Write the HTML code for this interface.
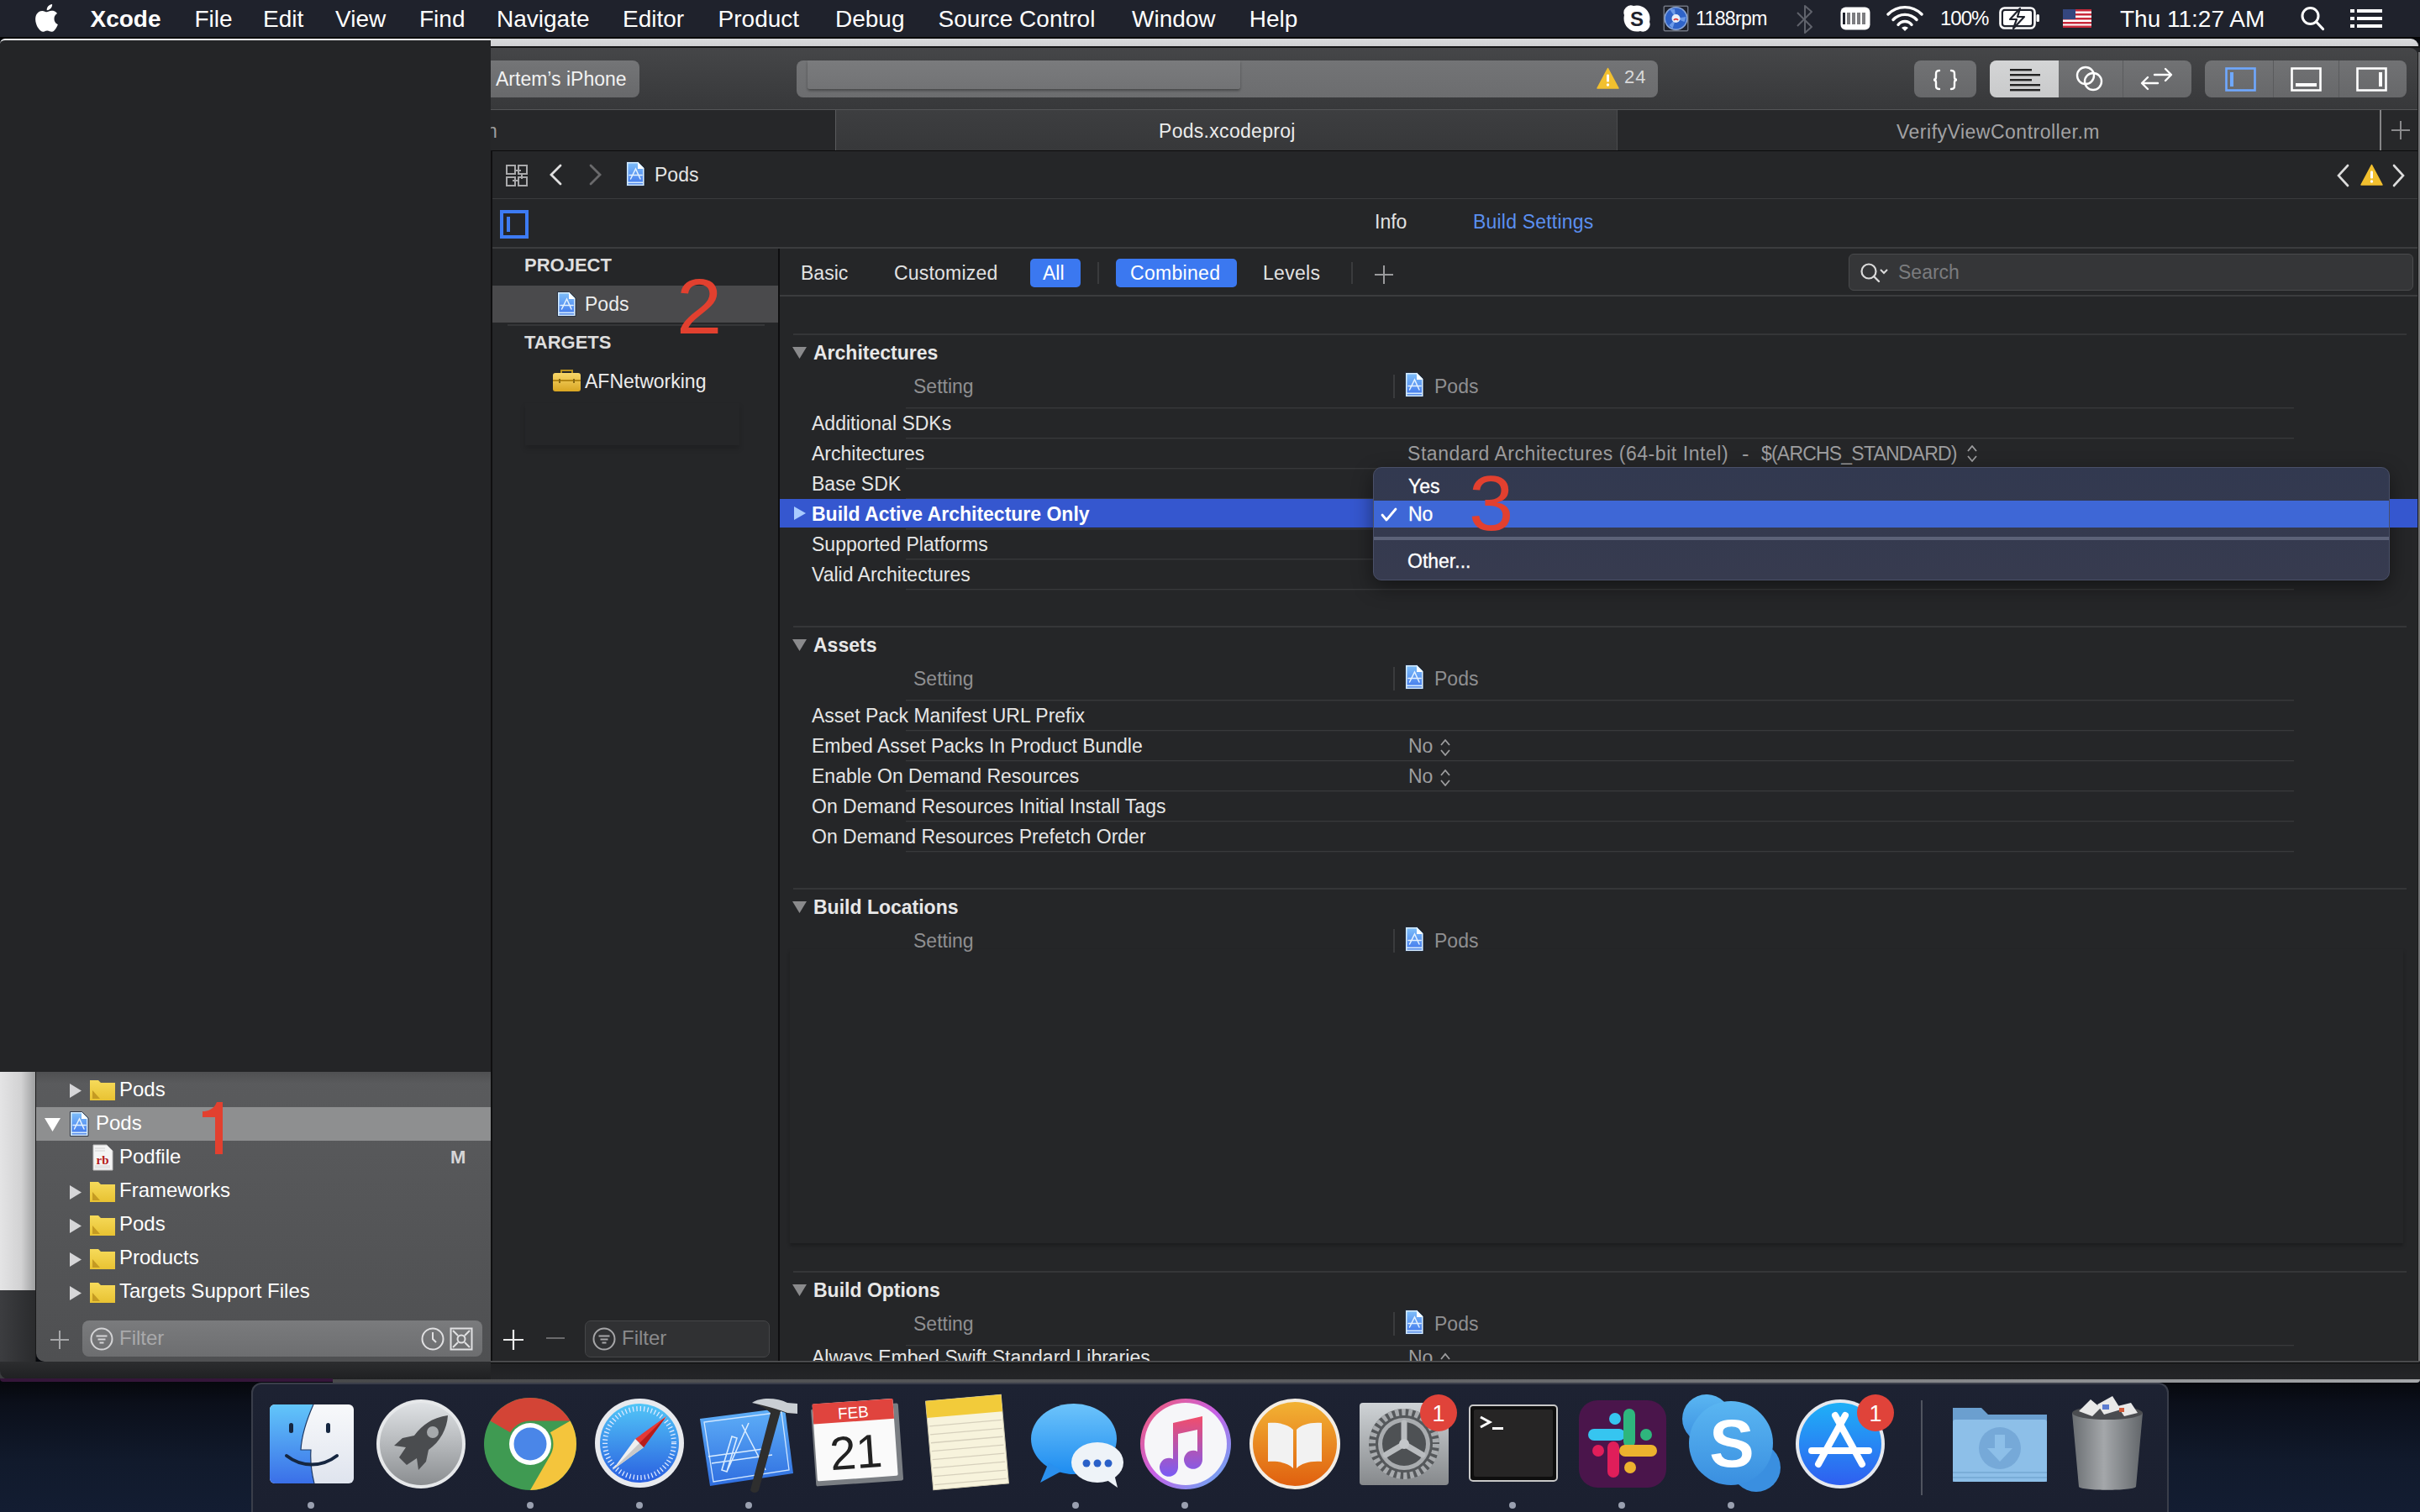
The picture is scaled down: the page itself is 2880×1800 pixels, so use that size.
<!DOCTYPE html><html><head><meta charset="utf-8"><style>
html,body{margin:0;padding:0;}
body{width:2880px;height:1800px;position:relative;overflow:hidden;background:#161b2b;font-family:"Liberation Sans",sans-serif;}
.r{position:absolute;}
.t{position:absolute;line-height:1;white-space:nowrap;}
</style></head><body>
<div class="r" style="left:0px;top:0px;width:2880px;height:1800px;background:linear-gradient(#06080d 0px,#06080d 1646px,#0b0f1a 1670px,#111a2c 1740px,#131d32 1800px);"></div>
<div class="r" style="left:0px;top:0px;width:2880px;height:44px;background:#1f222c;"></div>
<div class="r" style="left:0px;top:44px;width:2880px;height:2px;background:#050506;"></div>
<svg class="r" style="left:40px;top:4px;" width="30" height="34" viewBox="0 0 30 34"><path fill="#fff" d="M24.5 18.2c0-4.1 3.4-6.1 3.5-6.2-1.9-2.8-4.9-3.2-6-3.2-2.5-.3-5 1.5-6.3 1.5-1.3 0-3.3-1.5-5.4-1.4-2.8 0-5.400 1.6-6.800 4.1-2.9 5-.7 12.500 2.1 16.600 1.4 2 3 4.200 5.200 4.200 2.100-.1 2.900-1.400 5.400-1.400 2.500 0 3.200 1.400 5.400 1.300 2.200 0 3.600-2 5-4 1.600-2.300 2.200-4.500 2.300-4.600-.1 0-4.400-1.700-4.400-6.600zM20.400 6.100c1.100-1.400 1.900-3.300 1.700-5.200-1.600.1-3.600 1.100-4.700 2.400-1 1.200-1.900 3.100-1.700 5 1.800.1 3.600-.9 4.700-2.200z"/></svg>
<div class="t " style="left:107.5px;top:8.5px;font-size:28px;color:#ffffff;font-weight:700;">Xcode</div>
<div class="t " style="left:231.5px;top:8.5px;font-size:28px;color:#ffffff;font-weight:400;">File</div>
<div class="t " style="left:313.0px;top:8.5px;font-size:28px;color:#ffffff;font-weight:400;">Edit</div>
<div class="t " style="left:399.0px;top:8.5px;font-size:28px;color:#ffffff;font-weight:400;">View</div>
<div class="t " style="left:499.0px;top:8.5px;font-size:28px;color:#ffffff;font-weight:400;">Find</div>
<div class="t " style="left:591.0px;top:8.5px;font-size:28px;color:#ffffff;font-weight:400;">Navigate</div>
<div class="t " style="left:741.0px;top:8.5px;font-size:28px;color:#ffffff;font-weight:400;">Editor</div>
<div class="t " style="left:854.6px;top:8.5px;font-size:28px;color:#ffffff;font-weight:400;">Product</div>
<div class="t " style="left:994.0px;top:8.5px;font-size:28px;color:#ffffff;font-weight:400;">Debug</div>
<div class="t " style="left:1116.6px;top:8.5px;font-size:28px;color:#ffffff;font-weight:400;">Source Control</div>
<div class="t " style="left:1347.0px;top:8.5px;font-size:28px;color:#ffffff;font-weight:400;">Window</div>
<div class="t " style="left:1486.8px;top:8.5px;font-size:28px;color:#ffffff;font-weight:400;">Help</div>
<svg class="r" style="left:1931px;top:5px;" width="34" height="34" viewBox="0 0 34 34"><path fill="#fff" d="M17 1.5a15.5 15.5 0 0 1 15.5 15.5c0 1.4-.2 2.700-.5 4a8.500 8.500 0 0 1-11 11 15.500 15.500 0 0 1-4 .5A15.500 15.500 0 0 1 1.500 17c0-1.400.2-2.700.5-4A8.500 8.500 0 0 1 13 2c1.300-.3 2.600-.5 4-.5z"/><text x="17" y="26" text-anchor="middle" font-family="Liberation Sans" font-weight="700" font-size="24" fill="#1f222c">S</text></svg>
<svg class="r" style="left:1979px;top:6px;" width="31" height="32" viewBox="0 0 31 32"><rect x="0.500" y="0.500" width="30" height="31" rx="2" fill="#6f7480"/><rect x="2" y="2" width="27" height="28" rx="1" fill="#1f222c"/><circle cx="15.500" cy="16" r="14" fill="#8aa6d8"/><circle cx="15.500" cy="16" r="12.500" fill="#2f63c8"/><g fill="#6c9ae8"><path d="M15.500 16L8 5h6zM15.500 16l12-2-2 6zM15.500 16l-4 12-4-4z"/></g><circle cx="15.500" cy="16" r="5" fill="#e8eef8"/><path d="M13 18a3 3 0 0 1 5 0" fill="none" stroke="#d33" stroke-width="1.800"/></svg>
<div class="t " style="left:2018.0px;top:10.5px;font-size:23px;color:#ffffff;font-weight:400;letter-spacing:-0.6px;">1188rpm</div>
<svg class="r" style="left:2136px;top:6px;" width="24" height="34" viewBox="0 0 24 34"><path d="M3 9l17 17-8 7V1l8 7L3 25" fill="none" stroke="#5f626b" stroke-width="2" stroke-linejoin="round"/></svg>
<svg class="r" style="left:2189px;top:7px;" width="38" height="30" viewBox="0 0 38 30"><rect x="1.500" y="1.500" width="35" height="27" rx="6" fill="#fff"/><g fill="#7d7d80"><rect x="9" y="8" width="4" height="14"/><rect x="15" y="8" width="4" height="14"/><rect x="21" y="8" width="4" height="14"/><rect x="27" y="8" width="4" height="14"/></g><rect x="4" y="8" width="3" height="14" fill="#1f222c"/></svg>
<svg class="r" style="left:2244px;top:6px;" width="46" height="32" viewBox="0 0 46 32"><g fill="none" stroke="#fff" stroke-width="3.4" stroke-linecap="round"><path d="M3 11a28 28 0 0 1 40 0"/><path d="M9 17.5a19 19 0 0 1 28 0"/><path d="M15 23.5a10 10 0 0 1 16 0"/></g><path d="M19 27l4 4 4-4a6 6 0 0 0-8 0z" fill="#fff"/></svg>
<div class="t " style="left:2309.0px;top:9.7px;font-size:24px;color:#ffffff;font-weight:400;letter-spacing:-1px;">100%</div>
<svg class="r" style="left:2379px;top:8px;" width="50" height="28" viewBox="0 0 50 28"><rect x="1.500" y="1.500" width="41" height="24" rx="5" fill="none" stroke="#fff" stroke-width="2.600"/><rect x="5" y="5" width="34" height="17" rx="2" fill="#fff"/><rect x="44.500" y="9" width="3.500" height="9" rx="1.500" fill="#fff"/><path d="M25 2L13 15h8l-4 11 13-14h-8z" fill="#fff" stroke="#1f222c" stroke-width="2.200" stroke-linejoin="round"/></svg>
<svg class="r" style="left:2455px;top:11px;" width="34" height="22" viewBox="0 0 34 22"><rect width="34" height="22" fill="#fff"/><g fill="#c8283a"><rect y="0" width="34" height="2.5"/><rect y="5" width="34" height="2.5"/><rect y="10" width="34" height="2.5"/><rect y="15" width="34" height="2.5"/><rect y="19.5" width="34" height="2.5"/></g><rect width="15" height="12" fill="#34467e"/></svg>
<div class="t " style="left:2523.0px;top:8.5px;font-size:28px;color:#ffffff;font-weight:400;">Thu 11:27 AM</div>
<svg class="r" style="left:2737px;top:6px;" width="32" height="34" viewBox="0 0 32 34"><circle cx="12.5" cy="13" r="9.500" fill="none" stroke="#fff" stroke-width="3"/><path d="M19.500 20l8 8.500" stroke="#fff" stroke-width="3.200" stroke-linecap="round"/></svg>
<svg class="r" style="left:2796px;top:8px;" width="40" height="28" viewBox="0 0 40 28"><g fill="#fff"><rect x="1" y="3" width="5" height="4"/><rect x="1" y="12" width="5" height="4"/><rect x="1" y="21" width="5" height="4"/><rect x="9" y="3" width="30" height="4"/><rect x="9" y="12" width="30" height="4"/><rect x="9" y="21" width="30" height="4"/></g></svg>
<div class="r" style="left:584px;top:46px;width:2296px;height:1600px;background:#222326;border-radius:0 12px 10px 0;"></div>
<div class="r" style="left:584px;top:46px;width:2294px;height:9px;background:linear-gradient(#d9dadc,#cfd0d2);border-top-right-radius:12px;"></div>
<div class="r" style="left:584px;top:55px;width:2296px;height:2px;background:#151516;border-top-right-radius:10px;"></div>
<div class="r" style="left:584px;top:57px;width:2294px;height:74px;background:linear-gradient(#454648,#37383a);border-top-right-radius:10px;"></div>
<div class="r" style="left:584px;top:130px;width:2294px;height:1px;background:#545557;"></div>
<div class="r" style="left:583px;top:72px;width:178px;height:44px;background:linear-gradient(#747577,#68696b);border-radius:0 8px 8px 0;"></div>
<div class="t " style="left:590.0px;top:82.5px;font-size:23px;color:#f2f2f2;font-weight:400;">Artem’s iPhone</div>
<div class="r" style="left:948px;top:72px;width:1025px;height:44px;background:linear-gradient(#737476,#6c6d6f);border-radius:8px;"></div>
<div class="r" style="left:961px;top:72px;width:515px;height:34px;background:linear-gradient(#7a7b7d,#727375);border-radius:0 0 3px 3px;box-shadow:0 2px 3px rgba(0,0,0,.35);"></div>
<svg class="r" style="left:1900px;top:80px;" width="27" height="26" viewBox="0 0 27 26"><path d="M13.500 1.500L26 25H1z" fill="#f2c02f" stroke="#f2c02f" stroke-width="1.500" stroke-linejoin="round"/><rect x="12" y="8.500" width="3" height="9" rx="1.300" fill="#fff"/><circle cx="13.500" cy="21" r="1.700" fill="#fff"/></svg>
<div class="t " style="left:1933.0px;top:81.4px;font-size:22px;color:#d9d9da;font-weight:400;letter-spacing:1px;">24</div>
<div class="r" style="left:2278px;top:72px;width:74px;height:44px;background:linear-gradient(#717274,#67686a);border-radius:8px;"></div>
<svg class="r" style="left:2298px;top:82px;" width="34" height="26" viewBox="0 0 34 26"><g fill="none" stroke="#fff" stroke-width="2.4" stroke-linecap="round"><path d="M10 2c-4 0-4 2-4 5v3c0 2-1 3-3 3 2 0 3 1 3 3v3c0 3 0 5 4 5"/><path d="M24 2c4 0 4 2 4 5v3c0 2 1 3 3 3-2 0-3 1-3 3v3c0 3 0 5-4 5"/></g></svg>
<div class="r" style="left:2368px;top:72px;width:240px;height:44px;background:linear-gradient(#717274,#67686a);border-radius:8px;"></div>
<div class="r" style="left:2368px;top:72px;width:82px;height:44px;background:linear-gradient(#d4d5d6,#c9cacb);border-radius:8px 0 0 8px;"></div>
<div class="r" style="left:2526px;top:72px;width:1px;height:44px;background:#5a5b5d;"></div>
<svg class="r" style="left:2392px;top:80px;" width="40" height="30" viewBox="0 0 40 30"><g fill="#222"><rect x="0" y="2" width="26" height="2.400"/><rect x="0" y="8" width="36" height="2.400"/><rect x="0" y="14" width="26" height="2.400"/><rect x="0" y="20" width="36" height="2.400"/><rect x="0" y="26" width="36" height="2.400"/></g></svg>
<svg class="r" style="left:2470px;top:78px;" width="36" height="32" viewBox="0 0 36 32"><g fill="none" stroke="#fff" stroke-width="2.400"><circle cx="12" cy="12" r="10"/><circle cx="21" cy="19" r="10"/></g></svg>
<svg class="r" style="left:2545px;top:78px;" width="44" height="32" viewBox="0 0 44 32"><g fill="none" stroke="#fff" stroke-width="2.400" stroke-linecap="round" stroke-linejoin="round"><path d="M19 11h19M32 4l7 7-7 7"/><path d="M23 21H5M11 14l-7 7 7 7"/></g></svg>
<div class="r" style="left:2624px;top:72px;width:240px;height:44px;background:linear-gradient(#717274,#67686a);border-radius:8px;"></div>
<div class="r" style="left:2705px;top:72px;width:1px;height:44px;background:#5a5b5d;"></div>
<div class="r" style="left:2783px;top:72px;width:1px;height:44px;background:#5a5b5d;"></div>
<svg class="r" style="left:2648px;top:80px;" width="38" height="30" viewBox="0 0 38 30"><rect x="1.500" y="1.500" width="34" height="26" fill="none" stroke="#6fa8ff" stroke-width="2.600"/><rect x="6" y="6" width="4" height="17" fill="#6fa8ff"/></svg>
<svg class="r" style="left:2726px;top:80px;" width="38" height="30" viewBox="0 0 38 30"><rect x="1.500" y="1.500" width="34" height="26" fill="none" stroke="#fff" stroke-width="2.600"/><rect x="6" y="19" width="25" height="4" fill="#fff"/></svg>
<svg class="r" style="left:2804px;top:80px;" width="38" height="30" viewBox="0 0 38 30"><rect x="1.500" y="1.500" width="34" height="26" fill="none" stroke="#fff" stroke-width="2.600"/><rect x="27" y="6" width="4" height="17" fill="#fff"/></svg>
<div class="r" style="left:584px;top:131px;width:2294px;height:48px;background:#27282a;"></div>
<div class="r" style="left:584px;top:131px;width:411px;height:48px;background:#262729;"></div>
<div class="r" style="left:995px;top:131px;width:930px;height:48px;background:linear-gradient(#3d3e40,#37383a);"></div>
<div class="r" style="left:994px;top:131px;width:1px;height:48px;background:#5a5b5d;"></div>
<div class="r" style="left:1924px;top:131px;width:1px;height:48px;background:#4a4b4d;"></div>
<div class="r" style="left:2832px;top:131px;width:2px;height:48px;background:#858587;"></div>
<div class="t " style="left:584.0px;top:144.5px;font-size:23px;color:#9c9c9e;font-weight:400;clip-path:inset(0 0 0 4px);margin-left:-5px;">n</div>
<div class="t " style="left:1379.0px;top:144.5px;font-size:23px;color:#ececec;font-weight:400;letter-spacing:0.3px;">Pods.xcodeproj</div>
<div class="t " style="left:2257.0px;top:145.5px;font-size:23px;color:#a2a2a4;font-weight:400;letter-spacing:0.5px;">VerifyViewController.m</div>
<svg class="r" style="left:2846px;top:144px;" width="22" height="22" viewBox="0 0 22 22"><path d="M11 0v22M0 11h22" stroke="#8a8a8c" stroke-width="2"/></svg>
<div class="r" style="left:584px;top:179px;width:2294px;height:1px;background:#0c0c0d;"></div>
<div class="r" style="left:584px;top:180px;width:2294px;height:56px;background:#252628;"></div>
<div class="r" style="left:584px;top:236px;width:2294px;height:1px;background:#3a3b3d;"></div>
<svg class="r" style="left:601px;top:195px;" width="28" height="28" viewBox="0 0 28 28"><g fill="none" stroke="#a9a9ab" stroke-width="2"><rect x="2" y="2" width="10" height="10"/><rect x="16" y="2" width="10" height="10"/><rect x="2" y="16" width="10" height="10"/><rect x="16" y="16" width="10" height="10"/><path d="M12 8h7M20 12v6M9 20h7"/></g></svg>
<svg class="r" style="left:652px;top:194px;" width="20" height="28" viewBox="0 0 20 28"><path d="M15 3L4 14l11 11" fill="none" stroke="#e0e0e0" stroke-width="2.800" stroke-linecap="round"/></svg>
<svg class="r" style="left:699px;top:194px;" width="20" height="28" viewBox="0 0 20 28"><path d="M4 3l11 11L4 25" fill="none" stroke="#6a6a6c" stroke-width="2.800" stroke-linecap="round"/></svg>
<svg class="r" style="left:745px;top:192px" width="23" height="30" viewBox="0 0 23 30"><defs><linearGradient id="pg" x1="0" y1="0" x2="0" y2="1"><stop offset="0" stop-color="#7cbcf9"/><stop offset="1" stop-color="#4a82ee"/></linearGradient></defs><path d="M0.500 0.500h14l7.500 7.500v21.500H0.500z" fill="#d4ebff" stroke="#10182a" stroke-width="0.800"/><path d="M2.500 2.500h11l6.500 6.500v15.500H2.500z" fill="url(#pg)"/><path d="M14 2v7h7z" fill="#ffffff"/><rect x="2.500" y="26" width="17.500" height="1.600" fill="#5a8ee8"/><g fill="none" stroke="#e4f2ff" stroke-width="1.500" stroke-linecap="round"><path d="M5.500 21L11.500 9l5.500 12M4 16.500h15"/></g></svg>
<div class="t " style="left:779.0px;top:196.5px;font-size:23px;color:#e4e4e4;font-weight:400;">Pods</div>
<svg class="r" style="left:2780px;top:195px;" width="18" height="28" viewBox="0 0 18 28"><path d="M14 2L3 14l11 12" fill="none" stroke="#dcdcdc" stroke-width="2.600" stroke-linecap="round"/></svg>
<svg class="r" style="left:2809px;top:195px;" width="27" height="26" viewBox="0 0 27 26"><path d="M13.500 1.500L26 25H1z" fill="#f2c02f" stroke="#f2c02f" stroke-width="1.500" stroke-linejoin="round"/><rect x="12" y="8.500" width="3" height="9" rx="1.300" fill="#fff"/><circle cx="13.500" cy="21" r="1.700" fill="#fff"/></svg>
<svg class="r" style="left:2846px;top:195px;" width="18" height="28" viewBox="0 0 18 28"><path d="M3 2l11 12L3 26" fill="none" stroke="#dcdcdc" stroke-width="2.600" stroke-linecap="round"/></svg>
<div class="r" style="left:584px;top:237px;width:2294px;height:58px;background:#252628;"></div>
<div class="r" style="left:584px;top:294px;width:2294px;height:2px;background:#3b3c3e;"></div>
<svg class="r" style="left:595px;top:250px;" width="34" height="34" viewBox="0 0 34 34"><rect x="2" y="2" width="30" height="30" fill="none" stroke="#3d7bf3" stroke-width="4"/><rect x="8" y="8" width="4" height="18" fill="#3d7bf3"/></svg>
<div class="t " style="left:1636.0px;top:253.2px;font-size:23px;color:#e2e2e2;font-weight:400;">Info</div>
<div class="t " style="left:1753.0px;top:253.2px;font-size:23px;color:#5b8ff0;font-weight:400;letter-spacing:0.2px;">Build Settings</div>
<div class="r" style="left:583px;top:179px;width:3px;height:1443px;background:#0f0f10;"></div>
<div class="r" style="left:586px;top:296px;width:340px;height:1325px;background:#252628;"></div>
<div class="r" style="left:926px;top:296px;width:2px;height:1325px;background:#0e0e0f;"></div>
<div class="t " style="left:624.0px;top:305.4px;font-size:22px;color:#dedede;font-weight:700;">PROJECT</div>
<div class="r" style="left:586px;top:340px;width:340px;height:44px;background:#4a4a4c;"></div>
<div class="r" style="left:604px;top:386px;width:306px;height:2px;background:#353638;"></div>
<svg class="r" style="left:663px;top:347px" width="23" height="30" viewBox="0 0 23 30"><defs><linearGradient id="pg" x1="0" y1="0" x2="0" y2="1"><stop offset="0" stop-color="#7cbcf9"/><stop offset="1" stop-color="#4a82ee"/></linearGradient></defs><path d="M0.500 0.500h14l7.500 7.500v21.500H0.500z" fill="#d4ebff" stroke="#10182a" stroke-width="0.800"/><path d="M2.500 2.500h11l6.500 6.500v15.500H2.500z" fill="url(#pg)"/><path d="M14 2v7h7z" fill="#ffffff"/><rect x="2.500" y="26" width="17.500" height="1.600" fill="#5a8ee8"/><g fill="none" stroke="#e4f2ff" stroke-width="1.500" stroke-linecap="round"><path d="M5.500 21L11.500 9l5.500 12M4 16.500h15"/></g></svg>
<div class="t " style="left:696.0px;top:350.5px;font-size:23px;color:#ececec;font-weight:400;">Pods</div>
<div class="t " style="left:624.0px;top:397.4px;font-size:22px;color:#dedede;font-weight:700;">TARGETS</div>
<svg class="r" style="left:657px;top:438px;" width="35" height="30" viewBox="0 0 35 30"><defs><linearGradient id="tb" x1="0" y1="0" x2="0" y2="1"><stop offset="0" stop-color="#f7d66a"/><stop offset="1" stop-color="#d9a622"/></linearGradient></defs><path d="M11 6V3h13v3" fill="none" stroke="#b8911f" stroke-width="2"/><rect x="1" y="6" width="33" height="22" rx="3" fill="url(#tb)"/><rect x="1" y="14" width="33" height="2" fill="#b38614"/><rect x="8" y="13" width="2" height="5" fill="#8a6a14"/><rect x="25" y="13" width="2" height="5" fill="#8a6a14"/></svg>
<div class="t " style="left:696.0px;top:442.5px;font-size:23px;color:#ececec;font-weight:400;">AFNetworking</div>
<div class="r" style="left:625px;top:480px;width:255px;height:50px;background:transparent;box-shadow:0 4px 6px rgba(0,0,0,0.16);"></div>
<div class="r" style="left:928px;top:296px;width:1949px;height:1325px;background:#252628;"></div>
<div class="r" style="left:2877px;top:62px;width:1px;height:1558px;background:#1a1a1b;"></div>
<div class="r" style="left:2878px;top:62px;width:2px;height:1558px;background:#707173;"></div>
<div class="t " style="left:953.0px;top:313.5px;font-size:23px;color:#e2e2e2;font-weight:400;">Basic</div>
<div class="t " style="left:1064.0px;top:313.5px;font-size:23px;color:#e2e2e2;font-weight:400;letter-spacing:0.2px;">Customized</div>
<div class="r" style="left:1226px;top:308px;width:60px;height:34px;background:#3b78f0;border-radius:5px;"></div>
<div class="t " style="left:1241.0px;top:313.5px;font-size:23px;color:#ffffff;font-weight:400;">All</div>
<div class="r" style="left:1306px;top:312px;width:2px;height:26px;background:#3a3b3d;"></div>
<div class="r" style="left:1328px;top:308px;width:144px;height:34px;background:#3b78f0;border-radius:5px;"></div>
<div class="t " style="left:1345.0px;top:313.5px;font-size:23px;color:#ffffff;font-weight:400;letter-spacing:0.3px;">Combined</div>
<div class="t " style="left:1503.0px;top:313.5px;font-size:23px;color:#e2e2e2;font-weight:400;letter-spacing:0.3px;">Levels</div>
<div class="r" style="left:1608px;top:312px;width:2px;height:26px;background:#3a3b3d;"></div>
<svg class="r" style="left:1635px;top:315px;" width="24" height="24" viewBox="0 0 24 24"><path d="M12 1v22M1 12h22" stroke="#9a9a9c" stroke-width="2"/></svg>
<div class="r" style="left:2200px;top:302px;width:672px;height:44px;background:#353638;border:1px solid #4a4b4d;border-radius:6px;box-sizing:border-box;"></div>
<svg class="r" style="left:2213px;top:312px;" width="36" height="30" viewBox="0 0 36 30"><circle cx="11" cy="11" r="8.500" fill="none" stroke="#dadada" stroke-width="2.200"/><path d="M17 17l6 6" stroke="#dadada" stroke-width="2.400" stroke-linecap="round"/><path d="M25 9l4 4 4-4" fill="none" stroke="#dadada" stroke-width="2"/></svg>
<div class="t " style="left:2259.0px;top:313.1px;font-size:23px;color:#7b7c7e;font-weight:400;">Search</div>
<div class="r" style="left:928px;top:351px;width:1949px;height:2px;background:#3b3c3e;"></div>
<div class="r" style="left:944px;top:397px;width:1920px;height:2px;background:#353638;"></div>
<svg class="r" style="left:942px;top:412px;" width="20" height="16" viewBox="0 0 20 16"><path d="M1 1h17L9.500 15z" fill="#8a8a8c"/></svg>
<div class="t " style="left:968.0px;top:409.0px;font-size:23px;color:#e8e8e8;font-weight:700;">Architectures</div>
<div class="t " style="left:1087.0px;top:449.0px;font-size:23px;color:#8f8f91;font-weight:400;">Setting</div>
<div class="r" style="left:1658px;top:446px;width:2px;height:28px;background:#3a3b3d;"></div>
<svg class="r" style="left:1672px;top:443px" width="23" height="30" viewBox="0 0 23 30"><defs><linearGradient id="pg" x1="0" y1="0" x2="0" y2="1"><stop offset="0" stop-color="#7cbcf9"/><stop offset="1" stop-color="#4a82ee"/></linearGradient></defs><path d="M0.500 0.500h14l7.500 7.500v21.500H0.500z" fill="#d4ebff" stroke="#10182a" stroke-width="0.800"/><path d="M2.500 2.500h11l6.500 6.500v15.500H2.500z" fill="url(#pg)"/><path d="M14 2v7h7z" fill="#ffffff"/><rect x="2.500" y="26" width="17.500" height="1.600" fill="#5a8ee8"/><g fill="none" stroke="#e4f2ff" stroke-width="1.500" stroke-linecap="round"><path d="M5.500 21L11.500 9l5.500 12M4 16.500h15"/></g></svg>
<div class="t " style="left:1707.0px;top:448.5px;font-size:23px;color:#8f8f91;font-weight:400;">Pods</div>
<div class="r" style="left:1078px;top:485px;width:1652px;height:1px;background:#38393b;"></div>
<div class="r" style="left:1078px;top:486px;width:1652px;height:1px;background:#2b2c2e;"></div>
<div class="r" style="left:1078px;top:521px;width:1652px;height:1px;background:#38393b;"></div>
<div class="r" style="left:1078px;top:522px;width:1652px;height:1px;background:#2b2c2e;"></div>
<div class="t " style="left:966.0px;top:492.5px;font-size:23px;color:#e6e6e6;font-weight:400;">Additional SDKs</div>
<div class="r" style="left:1078px;top:557px;width:1652px;height:1px;background:#38393b;"></div>
<div class="r" style="left:1078px;top:558px;width:1652px;height:1px;background:#2b2c2e;"></div>
<div class="t " style="left:966.0px;top:528.5px;font-size:23px;color:#e6e6e6;font-weight:400;">Architectures</div>
<div class="r" style="left:1078px;top:593px;width:1652px;height:1px;background:#38393b;"></div>
<div class="r" style="left:1078px;top:594px;width:1652px;height:1px;background:#2b2c2e;"></div>
<div class="t " style="left:966.0px;top:564.5px;font-size:23px;color:#e6e6e6;font-weight:400;">Base SDK</div>
<div class="r" style="left:1078px;top:629px;width:1652px;height:1px;background:#38393b;"></div>
<div class="r" style="left:1078px;top:630px;width:1652px;height:1px;background:#2b2c2e;"></div>
<div class="r" style="left:1078px;top:665px;width:1652px;height:1px;background:#38393b;"></div>
<div class="r" style="left:1078px;top:666px;width:1652px;height:1px;background:#2b2c2e;"></div>
<div class="t " style="left:966.0px;top:636.5px;font-size:23px;color:#e6e6e6;font-weight:400;">Supported Platforms</div>
<div class="r" style="left:1078px;top:701px;width:1652px;height:1px;background:#38393b;"></div>
<div class="r" style="left:1078px;top:702px;width:1652px;height:1px;background:#2b2c2e;"></div>
<div class="t " style="left:966.0px;top:672.5px;font-size:23px;color:#e6e6e6;font-weight:400;">Valid Architectures</div>
<div class="r" style="left:928px;top:594px;width:1949px;height:34px;background:#3557cf;"></div>
<svg class="r" style="left:944px;top:602px;" width="16" height="18" viewBox="0 0 16 18"><path d="M1 1l14 8L1 17z" fill="#a9cbff"/></svg>
<div class="t " style="left:966.0px;top:600.5px;font-size:23px;color:#ffffff;font-weight:700;">Build Active Architecture Only</div>
<div class="t " style="left:1675.0px;top:528.5px;font-size:23px;color:#9d9d9f;font-weight:400;letter-spacing:0.55px;">Standard Architectures (64-bit Intel)</div>
<div class="t " style="left:2073.0px;top:528.5px;font-size:23px;color:#9d9d9f;font-weight:400;transform:scaleX(1.1);transform-origin:left;">-</div>
<div class="t " style="left:2096.0px;top:528.5px;font-size:23px;color:#9d9d9f;font-weight:400;letter-spacing:-0.8px;">$(ARCHS_STANDARD)</div>
<svg class="r" style="left:2340px;top:529px;" width="14" height="22" viewBox="0 0 14 22"><path d="M2 8l5-6 5 6M2 14l5 6 5-6" fill="none" stroke="#9d9d9f" stroke-width="1.800" stroke-linejoin="round"/></svg>
<div class="r" style="left:944px;top:745px;width:1920px;height:2px;background:#353638;"></div>
<svg class="r" style="left:942px;top:760px;" width="20" height="16" viewBox="0 0 20 16"><path d="M1 1h17L9.500 15z" fill="#8a8a8c"/></svg>
<div class="t " style="left:968.0px;top:757.0px;font-size:23px;color:#e8e8e8;font-weight:700;">Assets</div>
<div class="t " style="left:1087.0px;top:797.0px;font-size:23px;color:#8f8f91;font-weight:400;">Setting</div>
<div class="r" style="left:1658px;top:794px;width:2px;height:28px;background:#3a3b3d;"></div>
<svg class="r" style="left:1672px;top:791px" width="23" height="30" viewBox="0 0 23 30"><defs><linearGradient id="pg" x1="0" y1="0" x2="0" y2="1"><stop offset="0" stop-color="#7cbcf9"/><stop offset="1" stop-color="#4a82ee"/></linearGradient></defs><path d="M0.500 0.500h14l7.500 7.500v21.500H0.500z" fill="#d4ebff" stroke="#10182a" stroke-width="0.800"/><path d="M2.500 2.500h11l6.500 6.500v15.500H2.500z" fill="url(#pg)"/><path d="M14 2v7h7z" fill="#ffffff"/><rect x="2.500" y="26" width="17.500" height="1.600" fill="#5a8ee8"/><g fill="none" stroke="#e4f2ff" stroke-width="1.500" stroke-linecap="round"><path d="M5.500 21L11.500 9l5.500 12M4 16.500h15"/></g></svg>
<div class="t " style="left:1707.0px;top:796.5px;font-size:23px;color:#8f8f91;font-weight:400;">Pods</div>
<div class="r" style="left:1078px;top:833px;width:1652px;height:1px;background:#38393b;"></div>
<div class="r" style="left:1078px;top:834px;width:1652px;height:1px;background:#2b2c2e;"></div>
<div class="r" style="left:1078px;top:869px;width:1652px;height:1px;background:#38393b;"></div>
<div class="r" style="left:1078px;top:870px;width:1652px;height:1px;background:#2b2c2e;"></div>
<div class="t " style="left:966.0px;top:840.5px;font-size:23px;color:#e6e6e6;font-weight:400;">Asset Pack Manifest URL Prefix</div>
<div class="r" style="left:1078px;top:905px;width:1652px;height:1px;background:#38393b;"></div>
<div class="r" style="left:1078px;top:906px;width:1652px;height:1px;background:#2b2c2e;"></div>
<div class="t " style="left:966.0px;top:876.5px;font-size:23px;color:#e6e6e6;font-weight:400;">Embed Asset Packs In Product Bundle</div>
<div class="r" style="left:1078px;top:941px;width:1652px;height:1px;background:#38393b;"></div>
<div class="r" style="left:1078px;top:942px;width:1652px;height:1px;background:#2b2c2e;"></div>
<div class="t " style="left:966.0px;top:912.5px;font-size:23px;color:#e6e6e6;font-weight:400;">Enable On Demand Resources</div>
<div class="r" style="left:1078px;top:977px;width:1652px;height:1px;background:#38393b;"></div>
<div class="r" style="left:1078px;top:978px;width:1652px;height:1px;background:#2b2c2e;"></div>
<div class="t " style="left:966.0px;top:948.5px;font-size:23px;color:#e6e6e6;font-weight:400;">On Demand Resources Initial Install Tags</div>
<div class="r" style="left:1078px;top:1013px;width:1652px;height:1px;background:#38393b;"></div>
<div class="r" style="left:1078px;top:1014px;width:1652px;height:1px;background:#2b2c2e;"></div>
<div class="t " style="left:966.0px;top:984.5px;font-size:23px;color:#e6e6e6;font-weight:400;">On Demand Resources Prefetch Order</div>
<div class="t " style="left:1676.0px;top:876.5px;font-size:23px;color:#9d9d9f;font-weight:400;">No</div>
<svg class="r" style="left:1713px;top:879px;" width="14" height="22" viewBox="0 0 14 22"><path d="M2 8l5-6 5 6M2 14l5 6 5-6" fill="none" stroke="#9d9d9f" stroke-width="1.800" stroke-linejoin="round"/></svg>
<div class="t " style="left:1676.0px;top:912.5px;font-size:23px;color:#9d9d9f;font-weight:400;">No</div>
<svg class="r" style="left:1713px;top:915px;" width="14" height="22" viewBox="0 0 14 22"><path d="M2 8l5-6 5 6M2 14l5 6 5-6" fill="none" stroke="#9d9d9f" stroke-width="1.800" stroke-linejoin="round"/></svg>
<div class="r" style="left:944px;top:1057px;width:1920px;height:2px;background:#353638;"></div>
<svg class="r" style="left:942px;top:1072px;" width="20" height="16" viewBox="0 0 20 16"><path d="M1 1h17L9.500 15z" fill="#8a8a8c"/></svg>
<div class="t " style="left:968.0px;top:1069.0px;font-size:23px;color:#e8e8e8;font-weight:700;">Build Locations</div>
<div class="t " style="left:1087.0px;top:1109.0px;font-size:23px;color:#8f8f91;font-weight:400;">Setting</div>
<div class="r" style="left:1658px;top:1106px;width:2px;height:28px;background:#3a3b3d;"></div>
<svg class="r" style="left:1672px;top:1103px" width="23" height="30" viewBox="0 0 23 30"><defs><linearGradient id="pg" x1="0" y1="0" x2="0" y2="1"><stop offset="0" stop-color="#7cbcf9"/><stop offset="1" stop-color="#4a82ee"/></linearGradient></defs><path d="M0.500 0.500h14l7.500 7.500v21.500H0.500z" fill="#d4ebff" stroke="#10182a" stroke-width="0.800"/><path d="M2.500 2.500h11l6.500 6.500v15.500H2.500z" fill="url(#pg)"/><path d="M14 2v7h7z" fill="#ffffff"/><rect x="2.500" y="26" width="17.500" height="1.600" fill="#5a8ee8"/><g fill="none" stroke="#e4f2ff" stroke-width="1.500" stroke-linecap="round"><path d="M5.500 21L11.500 9l5.500 12M4 16.500h15"/></g></svg>
<div class="t " style="left:1707.0px;top:1108.5px;font-size:23px;color:#8f8f91;font-weight:400;">Pods</div>
<div class="r" style="left:940px;top:1130px;width:1920px;height:350px;background:transparent;box-shadow:0 3px 4px rgba(0,0,0,.25);"></div>
<div class="r" style="left:944px;top:1513px;width:1920px;height:2px;background:#353638;"></div>
<svg class="r" style="left:942px;top:1528px;" width="20" height="16" viewBox="0 0 20 16"><path d="M1 1h17L9.500 15z" fill="#8a8a8c"/></svg>
<div class="t " style="left:968.0px;top:1525.0px;font-size:23px;color:#e8e8e8;font-weight:700;">Build Options</div>
<div class="t " style="left:1087.0px;top:1565.0px;font-size:23px;color:#8f8f91;font-weight:400;">Setting</div>
<div class="r" style="left:1658px;top:1562px;width:2px;height:28px;background:#3a3b3d;"></div>
<svg class="r" style="left:1672px;top:1559px" width="23" height="30" viewBox="0 0 23 30"><defs><linearGradient id="pg" x1="0" y1="0" x2="0" y2="1"><stop offset="0" stop-color="#7cbcf9"/><stop offset="1" stop-color="#4a82ee"/></linearGradient></defs><path d="M0.500 0.500h14l7.500 7.500v21.500H0.500z" fill="#d4ebff" stroke="#10182a" stroke-width="0.800"/><path d="M2.500 2.500h11l6.500 6.500v15.500H2.500z" fill="url(#pg)"/><path d="M14 2v7h7z" fill="#ffffff"/><rect x="2.500" y="26" width="17.500" height="1.600" fill="#5a8ee8"/><g fill="none" stroke="#e4f2ff" stroke-width="1.500" stroke-linecap="round"><path d="M5.500 21L11.500 9l5.500 12M4 16.500h15"/></g></svg>
<div class="t " style="left:1707.0px;top:1564.5px;font-size:23px;color:#8f8f91;font-weight:400;">Pods</div>
<div class="r" style="left:1078px;top:1601px;width:1652px;height:1px;background:#38393b;"></div>
<div class="r" style="left:1078px;top:1602px;width:1652px;height:1px;background:#2b2c2e;"></div>
<div class="r" style="left:928px;top:1602px;width:1949px;height:19px;overflow:hidden">
<div class="t" style="left:38px;top:3px;font-size:23px;color:#e6e6e6">Always Embed Swift Standard Libraries</div><div class="t" style="left:748px;top:3px;font-size:23px;color:#9d9d9f">No</div><svg class="r" style="left:785px;top:8px" width="14" height="22"><path d="M2 8l5-6 5 6" fill="none" stroke="#9d9d9f" stroke-width="1.8"/></svg></div>
<div class="r" style="left:1634px;top:556px;width:1210px;height:135px;border-radius:10px;background:linear-gradient(#323950,#373b4f);border:1px solid #4a5068;box-sizing:border-box;box-shadow:0 8px 24px rgba(0,0,0,.45);overflow:hidden">
<div class="r" style="left:0;top:39px;width:1210px;height:32px;background:#3e67d6"></div>
<div class="r" style="left:0;top:82px;width:1210px;height:4px;background:#5c6278"></div>
</div>
<div class="t " style="left:1676.0px;top:568.2px;font-size:23px;color:#ffffff;font-weight:400;-webkit-text-stroke:0.3px #fff;">Yes</div>
<svg class="r" style="left:1643px;top:604px;" width="20" height="18" viewBox="0 0 20 18"><path d="M2 9l5 6L18 2" fill="none" stroke="#fff" stroke-width="2.800" stroke-linecap="round" stroke-linejoin="round"/></svg>
<div class="t " style="left:1676.0px;top:600.5px;font-size:23px;color:#ffffff;font-weight:400;-webkit-text-stroke:0.3px #fff;">No</div>
<div class="t " style="left:1675.0px;top:656.5px;font-size:23px;color:#ffffff;font-weight:400;-webkit-text-stroke:0.3px #fff;">Other...</div>
<div class="r" style="left:2844px;top:594px;width:33px;height:34px;background:#3557cf;"></div>
<div class="r" style="left:0px;top:46px;width:584px;height:1230px;background:#242527;border-top-left-radius:6px;border-top:2px solid #eef0f2;box-sizing:border-box;"></div>
<div class="r" style="left:0px;top:1276px;width:42px;height:260px;background:linear-gradient(90deg,#e4e4e5,#d2d2d3 60%,#9e9fa0);"></div>
<div class="r" style="left:0px;top:1536px;width:42px;height:105px;background:linear-gradient(90deg,#3c3d40,#2a2b2d);"></div>
<div class="r" style="left:0px;top:1621px;width:584px;height:21px;background:linear-gradient(#2c2d2f,#1f2022);border-bottom-left-radius:10px;"></div>
<div class="r" style="left:0px;top:1641px;width:396px;height:4px;background:#35163a;border-bottom-left-radius:6px;"></div>
<div class="r" style="left:42px;top:1276px;width:1px;height:345px;background:#1a1a1b;"></div>
<div class="r" style="left:43px;top:1276px;width:541px;height:345px;background:linear-gradient(#5a5b5d,#4f5052);border-bottom-left-radius:10px;"></div>
<div class="r" style="left:43px;top:1276px;width:541px;height:14px;background:linear-gradient(rgba(0,0,0,.12),rgba(0,0,0,0));"></div>
<div class="r" style="left:43px;top:1318px;width:541px;height:40px;background:#8e8f90;"></div>
<div class="t " style="left:142.0px;top:1285.4px;font-size:24px;color:#ffffff;font-weight:400;">Pods</div>
<svg class="r" style="left:82px;top:1289px;" width="16" height="20" viewBox="0 0 16 20"><path d="M1 1l14 8.500L1 18z" fill="#d6d6d8"/></svg>
<svg class="r" style="left:106px;top:1285px;" width="32" height="26" viewBox="0 0 32 26"><defs><linearGradient id="fg" x1="0" y1="0" x2="0" y2="1"><stop offset="0" stop-color="#f6da5a"/><stop offset="1" stop-color="#e8c232"/></linearGradient></defs><path d="M1 1h10l3 3h17v21H1z" fill="url(#fg)"/><path d="M4 13l9 10H4z" fill="#c49a22"/></svg>
<svg class="r" style="left:52px;top:1330px;" width="22" height="18" viewBox="0 0 22 18"><path d="M1 1h19L10.500 17z" fill="#ffffff"/></svg>
<svg class="r" style="left:83px;top:1323px" width="23" height="30" viewBox="0 0 23 30"><defs><linearGradient id="pg" x1="0" y1="0" x2="0" y2="1"><stop offset="0" stop-color="#7cbcf9"/><stop offset="1" stop-color="#4a82ee"/></linearGradient></defs><path d="M0.500 0.500h14l7.500 7.500v21.500H0.500z" fill="#d4ebff" stroke="#10182a" stroke-width="0.800"/><path d="M2.500 2.500h11l6.500 6.500v15.500H2.500z" fill="url(#pg)"/><path d="M14 2v7h7z" fill="#ffffff"/><rect x="2.500" y="26" width="17.500" height="1.600" fill="#5a8ee8"/><g fill="none" stroke="#e4f2ff" stroke-width="1.500" stroke-linecap="round"><path d="M5.500 21L11.500 9l5.500 12M4 16.500h15"/></g></svg>
<div class="t " style="left:114.0px;top:1325.1px;font-size:24px;color:#ffffff;font-weight:400;">Pods</div>
<svg class="r" style="left:110px;top:1362px;" width="25" height="32" viewBox="0 0 25 32"><path d="M1 1h16l7 7v23H1z" fill="#f4f4f4" stroke="#bdbdbd"/><path d="M3 5h12M3 8h12M3 26h18M3 28h18" stroke="#ccc" stroke-width=".8"/><text x="12" y="24" text-anchor="middle" font-family="Liberation Serif" font-size="15" fill="#b51a1a" font-weight="700">rb</text></svg>
<div class="t " style="left:142.0px;top:1365.3px;font-size:24px;color:#ffffff;font-weight:400;">Podfile</div>
<div class="t " style="left:536.0px;top:1367.0px;font-size:22px;color:#d6d6d8;font-weight:700;">M</div>
<svg class="r" style="left:82px;top:1409.6px;" width="16" height="20" viewBox="0 0 16 20"><path d="M1 1l14 8.500L1 18z" fill="#d6d6d8"/></svg>
<svg class="r" style="left:106px;top:1405.6px;" width="32" height="26" viewBox="0 0 32 26"><defs><linearGradient id="fg" x1="0" y1="0" x2="0" y2="1"><stop offset="0" stop-color="#f6da5a"/><stop offset="1" stop-color="#e8c232"/></linearGradient></defs><path d="M1 1h10l3 3h17v21H1z" fill="url(#fg)"/><path d="M4 13l9 10H4z" fill="#c49a22"/></svg>
<div class="t " style="left:142.0px;top:1405.3px;font-size:24px;color:#ffffff;font-weight:400;">Frameworks</div>
<svg class="r" style="left:82px;top:1449.6px;" width="16" height="20" viewBox="0 0 16 20"><path d="M1 1l14 8.500L1 18z" fill="#d6d6d8"/></svg>
<svg class="r" style="left:106px;top:1445.6px;" width="32" height="26" viewBox="0 0 32 26"><defs><linearGradient id="fg" x1="0" y1="0" x2="0" y2="1"><stop offset="0" stop-color="#f6da5a"/><stop offset="1" stop-color="#e8c232"/></linearGradient></defs><path d="M1 1h10l3 3h17v21H1z" fill="url(#fg)"/><path d="M4 13l9 10H4z" fill="#c49a22"/></svg>
<div class="t " style="left:142.0px;top:1445.3px;font-size:24px;color:#ffffff;font-weight:400;">Pods</div>
<svg class="r" style="left:82px;top:1489.6px;" width="16" height="20" viewBox="0 0 16 20"><path d="M1 1l14 8.500L1 18z" fill="#d6d6d8"/></svg>
<svg class="r" style="left:106px;top:1485.6px;" width="32" height="26" viewBox="0 0 32 26"><defs><linearGradient id="fg" x1="0" y1="0" x2="0" y2="1"><stop offset="0" stop-color="#f6da5a"/><stop offset="1" stop-color="#e8c232"/></linearGradient></defs><path d="M1 1h10l3 3h17v21H1z" fill="url(#fg)"/><path d="M4 13l9 10H4z" fill="#c49a22"/></svg>
<div class="t " style="left:142.0px;top:1485.3px;font-size:24px;color:#ffffff;font-weight:400;">Products</div>
<svg class="r" style="left:82px;top:1529.6px;" width="16" height="20" viewBox="0 0 16 20"><path d="M1 1l14 8.500L1 18z" fill="#d6d6d8"/></svg>
<svg class="r" style="left:106px;top:1525.6px;" width="32" height="26" viewBox="0 0 32 26"><defs><linearGradient id="fg" x1="0" y1="0" x2="0" y2="1"><stop offset="0" stop-color="#f6da5a"/><stop offset="1" stop-color="#e8c232"/></linearGradient></defs><path d="M1 1h10l3 3h17v21H1z" fill="url(#fg)"/><path d="M4 13l9 10H4z" fill="#c49a22"/></svg>
<div class="t " style="left:142.0px;top:1525.3px;font-size:24px;color:#ffffff;font-weight:400;">Targets Support Files</div>
<svg class="r" style="left:59px;top:1583px;" width="24" height="24" viewBox="0 0 24 24"><path d="M12 1v22M1 12h22" stroke="#a6a7a9" stroke-width="2"/></svg>
<div class="r" style="left:98px;top:1572px;width:476px;height:43px;background:linear-gradient(#7a7b7d,#6d6e70);border-radius:8px;"></div>
<svg class="r" style="left:107px;top:1580px;" width="28" height="28" viewBox="0 0 28 28"><circle cx="14" cy="14" r="12.500" fill="none" stroke="#d4d4d6" stroke-width="2"/><path d="M7.500 10.500h13M9.500 14.500h9M11.500 18.500h5" stroke="#d4d4d6" stroke-width="2"/></svg>
<div class="t " style="left:142.0px;top:1581.4px;font-size:24px;color:#a9a9ab;font-weight:400;">Filter</div>
<svg class="r" style="left:501px;top:1580px;" width="28" height="28" viewBox="0 0 28 28"><circle cx="14" cy="14" r="12.500" fill="none" stroke="#e0e0e2" stroke-width="2"/><path d="M14 6v8l4 4" fill="none" stroke="#e0e0e2" stroke-width="2"/></svg>
<svg class="r" style="left:535px;top:1580px;" width="28" height="28" viewBox="0 0 28 28"><rect x="1.500" y="1.500" width="25" height="25" fill="none" stroke="#e0e0e2" stroke-width="2"/><path d="M4 4l6 6M24 4l-6 6M4 24l6-6M24 24l-6-6" stroke="#e0e0e2" stroke-width="2"/><circle cx="14" cy="14" r="4.500" fill="none" stroke="#e0e0e2" stroke-width="2"/></svg>
<svg class="r" style="left:598px;top:1582px;" width="26" height="26" viewBox="0 0 26 26"><path d="M13 1v24M1 13h24" stroke="#ececec" stroke-width="2.200"/></svg>
<div class="r" style="left:650px;top:1592px;width:22px;height:2px;background:#6a6a6c;"></div>
<div class="r" style="left:696px;top:1572px;width:220px;height:44px;background:#303133;border:1px solid #454648;border-radius:7px;box-sizing:border-box;"></div>
<svg class="r" style="left:705px;top:1580px;" width="28" height="28" viewBox="0 0 28 28"><circle cx="14" cy="14" r="12.500" fill="none" stroke="#a6a6a8" stroke-width="2"/><path d="M7.500 10.500h13M9.500 14.500h9M11.500 18.500h5" stroke="#a6a6a8" stroke-width="2"/></svg>
<div class="t " style="left:740.0px;top:1581.4px;font-size:24px;color:#8a8a8c;font-weight:400;">Filter</div>
<div class="r" style="left:584px;top:1620px;width:2296px;height:2px;background:#4a4b4d;border-bottom-right-radius:8px;"></div>
<div class="r" style="left:584px;top:1622px;width:2296px;height:1px;background:#0a0a0b;"></div>
<div class="r" style="left:584px;top:1623px;width:2296px;height:19px;background:linear-gradient(#1f2022,#242528);"></div>
<div class="r" style="left:396px;top:1642px;width:2484px;height:4px;background:linear-gradient(90deg,#48494b,#5d5e61 50%,#a5a7aa);border-bottom-right-radius:10px;"></div>
<div class="t " style="left:805.0px;top:319.1px;font-size:92px;color:#e2402f;font-weight:400;transform:scaleX(1.06);transform-origin:left;">2</div>
<div class="t " style="left:1748.0px;top:553.1px;font-size:92px;color:#e2402f;font-weight:400;transform:scaleX(1.04);transform-origin:left;">3</div>
<svg class="r" style="left:240px;top:1310px;" width="30" height="66" viewBox="0 0 30 66"><path d="M16 64V20H1V13C10 13 15 9 18 2H25V64z" fill="#e2402f"/></svg>
<div class="r" style="left:299px;top:1646px;width:2282px;height:154px;background:linear-gradient(#1d2232,#1b2030);border-radius:12px 12px 0 0;border:2px solid #3a3e4a;border-bottom:none;box-sizing:border-box;"></div>
<svg class="r" style="left:321px;top:1672px;" width="100" height="94" viewBox="0 0 100 94"><defs><linearGradient id="fL" x1="0" y1="0" x2="0" y2="1"><stop offset="0" stop-color="#62c6fa"/><stop offset="1" stop-color="#3a6fe8"/></linearGradient><linearGradient id="fR" x1="0" y1="0" x2="0" y2="1"><stop offset="0" stop-color="#f8f9fb"/><stop offset="1" stop-color="#dfe4ee"/></linearGradient></defs><rect x="0" y="0" width="100" height="94" rx="6" fill="url(#fR)"/><path d="M6 0h46c-8 18-14 36-15 54h12c-1 14 1 28 4 40H6a6 6 0 0 1-6-6V6a6 6 0 0 1 6-6z" fill="url(#fL)"/><path d="M52 0c-8 18-14 36-15 54h12c-1 14 1 28 4 40" fill="none" stroke="#1e3a66" stroke-width="1.200"/><rect x="23" y="22" width="5" height="12" rx="2.500" fill="#152640"/><rect x="67" y="22" width="5" height="12" rx="2.500" fill="#152640"/><path d="M20 61c18 14 42 14 60 0" fill="none" stroke="#152640" stroke-width="4" stroke-linecap="round"/></svg>
<div class="r" style="left:366px;top:1788px;width:8px;height:8px;background:#9aa0b0;border-radius:50%;"></div>
<svg class="r" style="left:447px;top:1665px;" width="108" height="108" viewBox="0 0 108 108"><defs><linearGradient id="lp" x1="0" y1="0" x2="0" y2="1"><stop offset="0" stop-color="#dfe2e5"/><stop offset="1" stop-color="#8b8e91"/></linearGradient></defs><circle cx="54" cy="54" r="53" fill="#e6e8ea"/><circle cx="54" cy="54" r="49" fill="url(#lp)"/><path d="M86 20C70 22 56 30 46 44l-14 3-10 9 14 2-8 12 9 9 12-8 2 14 9-10 3-14c14-10 22-25 23-41z" fill="#4a4c4f"/><circle cx="68" cy="40" r="7" fill="#a6a9ac"/></svg>
<svg class="r" style="left:575px;top:1663px;" width="112" height="112" viewBox="0 0 112 112"><circle cx="56" cy="56" r="55" fill="#3f9a52"/><path d="M56 1a55 55 0 0 1 47.600 27.500H56a27.500 27.500 0 0 0-23.800 13.700L8.400 28.500A55 55 0 0 1 56 1z" fill="#d34436"/><path d="M103.600 28.500A55 55 0 0 1 56 111l23.800-41.300A27.500 27.500 0 0 0 79.800 42.200z" fill="#f4c53c"/><circle cx="56" cy="56" r="25" fill="#fff"/><circle cx="56" cy="56" r="19.500" fill="#4a86e8"/></svg>
<div class="r" style="left:627px;top:1788px;width:8px;height:8px;background:#9aa0b0;border-radius:50%;"></div>
<svg class="r" style="left:707px;top:1664px;" width="108" height="108" viewBox="0 0 108 108"><defs><linearGradient id="sf" x1="0" y1="0" x2="0" y2="1"><stop offset="0" stop-color="#52c6f7"/><stop offset="1" stop-color="#2a5fe0"/></linearGradient></defs><circle cx="54" cy="54" r="53" fill="#e8eaee"/><circle cx="54" cy="54" r="47" fill="url(#sf)"/><circle cx="54" cy="54" r="41" fill="none" stroke="#dfe9ff" stroke-width="6" stroke-dasharray="1.300 3.100"/><path d="M86 22L59 59 49 49z" fill="#e53935"/><path d="M22 86L59 59 49 49z" fill="#f0f0f0"/><path d="M22 86L59 59 54 54z" fill="#c8c8c8"/><path d="M86 22L59 59 54 54z" fill="#b71c1c"/></svg>
<div class="r" style="left:757px;top:1788px;width:8px;height:8px;background:#9aa0b0;border-radius:50%;"></div>
<svg class="r" style="left:825px;top:1660px;" width="140" height="118" viewBox="0 0 140 118"><defs><linearGradient id="xc" x1="0" y1="0" x2="0" y2="1"><stop offset="0" stop-color="#5fb0f8"/><stop offset="1" stop-color="#2f6ee0"/></linearGradient></defs><path d="M8 29L109 16 119 94 20 109z" fill="url(#xc)"/><path d="M13 33L105 21 114 90 24 104z" fill="none" stroke="#cfe6ff" stroke-width="1.300"/><g fill="none" stroke="#d9ecff" stroke-width="1.600"><path d="M40 92L66 34M58 36l28 54M18 74l72-10M22 82l72-10M34 90l12-40 6 2-12 40z"/></g><path d="M72 10c8-6 24-5 40 2l10 1-2 10-10-1-6-2-26 94c-2 4-8 4-10 0l24-92c-6-6-14-9-20-12z" fill="#2e2e2e"/><path d="M70 10c10-7 30-6 42 0l12 1v12l-12-1c-10-4-24-8-42-12z" fill="#c9ced3"/></svg>
<div class="r" style="left:887px;top:1788px;width:8px;height:8px;background:#9aa0b0;border-radius:50%;"></div>
<svg class="r" style="left:962px;top:1662px;" width="116" height="115" viewBox="0 0 116 115"><g transform="rotate(-4 58 57)"><rect x="6" y="12" width="104" height="92" rx="2" fill="#7a7e83"/><rect x="8" y="6" width="96" height="92" rx="2" fill="#fafafa"/><rect x="8" y="6" width="96" height="24" fill="#e0443e"/><text x="56" y="26" text-anchor="middle" font-family="Liberation Sans" font-size="19" fill="#fff">FEB</text><text x="56" y="86" text-anchor="middle" font-family="Liberation Sans" font-size="56" fill="#222">21</text></g></svg>
<svg class="r" style="left:1096px;top:1658px;" width="110" height="118" viewBox="0 0 110 118"><g transform="rotate(-5 55 59)"><rect x="10" y="6" width="90" height="106" fill="#f7f3dc" stroke="#cfcab2" stroke-width="1"/><rect x="10" y="6" width="90" height="20" fill="#f2cb3a"/><g stroke="#d6d0bc" stroke-width="1.300"><path d="M12 36h86M12 46h86M12 56h86M12 66h86M12 76h86M12 86h86M12 96h86M12 106h86"/></g></g></svg>
<svg class="r" style="left:1226px;top:1669px;" width="112" height="104" viewBox="0 0 112 104"><defs><linearGradient id="ms" x1="0" y1="0" x2="0" y2="1"><stop offset="0" stop-color="#6dc4fb"/><stop offset="1" stop-color="#1e8cf0"/></linearGradient></defs><ellipse cx="52" cy="44" rx="51" ry="42" fill="url(#ms)"/><path d="M22 72l-10 24 26-14z" fill="#2a90ee"/><ellipse cx="80" cy="72" rx="31" ry="24" fill="#eef3f8"/><path d="M90 92l14 10-4-16z" fill="#eef3f8"/><circle cx="67" cy="73" r="4.500" fill="#2a60c8"/><circle cx="80" cy="73" r="4.500" fill="#2a60c8"/><circle cx="93" cy="73" r="4.500" fill="#2a60c8"/></svg>
<div class="r" style="left:1276px;top:1788px;width:8px;height:8px;background:#9aa0b0;border-radius:50%;"></div>
<svg class="r" style="left:1356px;top:1664px;" width="110" height="110" viewBox="0 0 110 110"><defs><linearGradient id="it" x1="0" y1="0" x2="1" y2="1"><stop offset="0" stop-color="#f45b6c"/><stop offset="0.5" stop-color="#c561e8"/><stop offset="1" stop-color="#5ab6f5"/></linearGradient><linearGradient id="it2" x1="0" y1="0" x2="0" y2="1"><stop offset="0" stop-color="#f24d6a"/><stop offset="1" stop-color="#7a5cf5"/></linearGradient></defs><circle cx="55" cy="55" r="54" fill="url(#it)"/><circle cx="55" cy="55" r="49" fill="#f6f6f9"/><path d="M40 30l35-8v52a11 11 0 1 1-6-10V38l-23 5v40a11 11 0 1 1-6-10z" fill="url(#it2)"/></svg>
<div class="r" style="left:1406px;top:1788px;width:8px;height:8px;background:#9aa0b0;border-radius:50%;"></div>
<svg class="r" style="left:1486px;top:1664px;" width="110" height="110" viewBox="0 0 110 110"><defs><linearGradient id="ib" x1="0" y1="0" x2="0" y2="1"><stop offset="0" stop-color="#f2b234"/><stop offset="1" stop-color="#e0600f"/></linearGradient></defs><circle cx="55" cy="55" r="54" fill="#f3ede4"/><circle cx="55" cy="55" r="50" fill="url(#ib)"/><path d="M53 38c-6-6-16-9-30-8v46c14-1 24 2 30 8zM57 38c6-6 16-9 30-8v46c-14-1-24 2-30 8z" fill="#f2f2f2"/></svg>
<svg class="r" style="left:1617px;top:1669px;" width="108" height="100" viewBox="0 0 108 100"><defs><linearGradient id="sp" x1="0" y1="0" x2="0" y2="1"><stop offset="0" stop-color="#cfd3d6"/><stop offset="1" stop-color="#86898c"/></linearGradient></defs><rect x="1" y="1" width="106" height="98" rx="4" fill="url(#sp)"/><circle cx="54" cy="50" r="42" fill="#55585b"/><circle cx="54" cy="50" r="38" fill="none" stroke="#a8abae" stroke-width="8" stroke-dasharray="4.500 3.500"/><circle cx="54" cy="50" r="31" fill="#a9acaf"/><circle cx="54" cy="50" r="26" fill="#4e5154"/><g stroke="#b9bcbf" stroke-width="7" stroke-linecap="round"><path d="M54 50V25M54 50l-22 13M54 50l22 13"/></g><circle cx="54" cy="50" r="6" fill="#c4c7ca"/></svg>
<svg class="r" style="left:1748px;top:1672px;" width="106" height="92" viewBox="0 0 106 92"><rect x="1" y="1" width="104" height="90" rx="4" fill="#0e0e0e" stroke="#c8c8c8" stroke-width="2"/><rect x="6" y="6" width="94" height="80" rx="2" fill="#262525"/><path d="M14 15l11 6-11 6" fill="none" stroke="#fff" stroke-width="3"/><rect x="28" y="27" width="13" height="3" fill="#fff"/></svg>
<div class="r" style="left:1796px;top:1788px;width:8px;height:8px;background:#9aa0b0;border-radius:50%;"></div>
<svg class="r" style="left:1878px;top:1666px;" width="106" height="106" viewBox="0 0 106 106"><rect x="1" y="1" width="104" height="104" rx="22" fill="#4a154b"/><g stroke-linecap="round" stroke-width="14" fill="none"><path d="M19 42h30" stroke="#36c5f0"/><path d="M61 18v32" stroke="#2eb67d"/><path d="M56 61h31" stroke="#ecb22e"/><path d="M42 57v29" stroke="#e01e5a"/><path d="M44 23h0" stroke="#36c5f0"/><path d="M81 42h0" stroke="#2eb67d"/><path d="M62 81h0" stroke="#ecb22e"/><path d="M24 61h0" stroke="#e01e5a"/></g></svg>
<div class="r" style="left:1926px;top:1788px;width:8px;height:8px;background:#9aa0b0;border-radius:50%;"></div>
<svg class="r" style="left:2001px;top:1659px;" width="119" height="118" viewBox="0 0 119 118"><defs><linearGradient id="sk" x1="0" y1="0" x2="0" y2="1"><stop offset="0" stop-color="#5ab6f2"/><stop offset="1" stop-color="#3a8fe0"/></linearGradient></defs><circle cx="30" cy="30" r="29" fill="url(#sk)"/><circle cx="89" cy="88" r="29" fill="#3a8fe0"/><circle cx="59" cy="59" r="50" fill="url(#sk)"/><text x="60" y="87" text-anchor="middle" font-family="Liberation Sans" font-size="80" font-weight="700" fill="#fff">S</text></svg>
<div class="r" style="left:2056px;top:1788px;width:8px;height:8px;background:#9aa0b0;border-radius:50%;"></div>
<svg class="r" style="left:2136px;top:1665px;" width="108" height="108" viewBox="0 0 108 108"><defs><linearGradient id="as" x1="0" y1="0" x2="0" y2="1"><stop offset="0" stop-color="#1fb0f7"/><stop offset="1" stop-color="#2f5ff0"/></linearGradient></defs><circle cx="54" cy="54" r="53" fill="#e6e9ee"/><circle cx="54" cy="54" r="49" fill="url(#as)"/><g stroke="#fff" stroke-width="8" stroke-linecap="round"><path d="M60 20L28 78M48 20l32 58M20 62h68"/></g></svg>
<svg class="r" style="left:1689px;top:1659px;" width="46" height="46" viewBox="0 0 46 46"><circle cx="23" cy="23" r="22" fill="#e0433a"/><text x="23" y="33" text-anchor="middle" font-family="Liberation Sans" font-size="27" fill="#fff">1</text></svg>
<svg class="r" style="left:2209px;top:1659px;" width="46" height="46" viewBox="0 0 46 46"><circle cx="23" cy="23" r="22" fill="#e0433a"/><text x="23" y="33" text-anchor="middle" font-family="Liberation Sans" font-size="27" fill="#fff">1</text></svg>
<div class="r" style="left:2286px;top:1667px;width:2px;height:113px;background:#50545f;"></div>
<svg class="r" style="left:2322px;top:1672px;" width="116" height="94" viewBox="0 0 116 94"><path d="M2 4h34l8 8h70v80H2z" fill="#6b9fcf"/><rect x="2" y="18" width="112" height="74" rx="3" fill="#8dbfe8"/><rect x="2" y="80" width="112" height="2" fill="#7aaed8"/><rect x="2" y="86" width="112" height="2" fill="#7aaed8"/><circle cx="58" cy="52" r="25" fill="#76a9d8"/><path d="M52 36h12v16h9L58 68 43 52h9z" fill="#8dbfe8"/></svg>
<svg class="r" style="left:2462px;top:1658px;" width="92" height="118" viewBox="0 0 92 118"><defs><linearGradient id="tr" x1="0" y1="0" x2="1" y2="0"><stop offset="0" stop-color="#6a6e72"/><stop offset="0.45" stop-color="#a4a7aa"/><stop offset="1" stop-color="#62666a"/></linearGradient></defs><path d="M4 24h84l-8 88c-4 5-64 5-68 0z" fill="url(#tr)"/><ellipse cx="46" cy="24" rx="42" ry="8" fill="#4a4c50"/><g fill="#e8e8e8"><path d="M12 22l14-14 12 10-10 10zM34 14l18-10 10 16-20 6zM58 16l16-4 8 12-16 4z"/></g><g fill="#5a7bd0"><rect x="40" y="14" width="8" height="6"/></g><g fill="#d05a3a"><rect x="60" y="18" width="6" height="5"/></g></svg>
</body></html>
